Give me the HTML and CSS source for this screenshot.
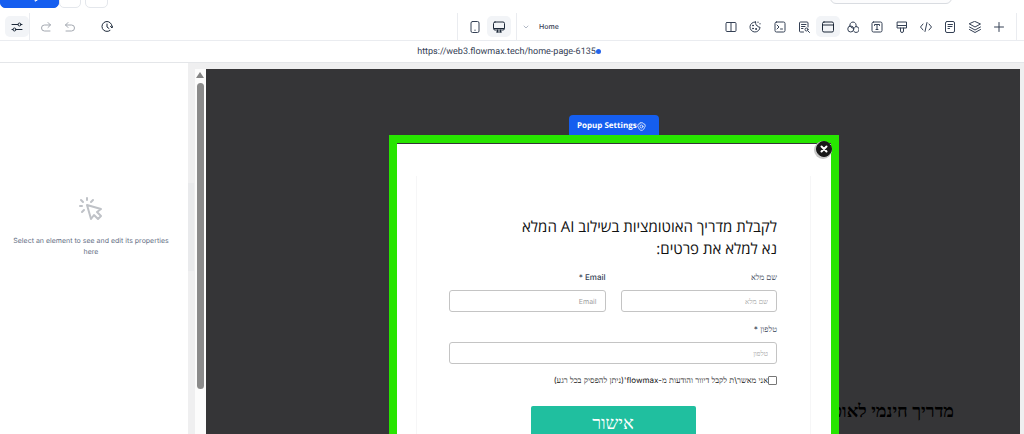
FILE: index.html
```html
<!DOCTYPE html>
<html lang="en">
<head>
<meta charset="utf-8">
<title>Page editor</title>
<link rel="stylesheet" href="styles.css">
</head>
<body>
<header class="actions">
  <button class="action action-primary" aria-label="Preview"><svg class="icon" viewBox="0 0 24 24"><path class="solid" d="M5 2l16 10L5 22z"/></svg></button>
  <button class="action action-save" aria-label="Save"><svg class="icon" viewBox="0 0 24 24"><rect x="3" y="3" width="18" height="16" rx="2"/><path d="M7 16h10"/></svg></button>
  <button class="action action-more" aria-label="More"><svg class="icon" viewBox="0 0 24 24"><path d="M12 5v8"/></svg></button>
  <button class="search" aria-label="Search"></button>
</header>
<nav class="toolbar">
  <div class="history">
    <div class="panel-toggle"><button class="tool active" aria-label="Properties"><svg class="icon" viewBox="0 0 24 24"><path d="M2 7h12M20 7h2M2 17h2M10 17h12"/><circle cx="17" cy="7" r="3"/><circle cx="7" cy="17" r="3"/></svg></button></div>
    <button class="tool muted" aria-label="Redo"><svg class="icon" viewBox="0 0 24 24"><path d="M16 3l5 5-5 5M21 8H9a6 6 0 0 0 0 12h11"/></svg></button>
    <button class="tool muted" aria-label="Undo"><svg class="icon" viewBox="0 0 24 24"><path d="M8 3L3 8l5 5M3 8h12a6 6 0 0 1 0 12H4"/></svg></button>
    <button class="tool tool-versions" aria-label="Version history"><svg class="icon" viewBox="0 0 24 24"><path d="M18 19a10 10 0 1 1 4-8M12 6v6l4 3M19 11l3 3 2-4"/></svg></button>
  </div>
  <div class="devices">
    <button class="tool" aria-label="Mobile"><svg class="icon" viewBox="0 0 24 24"><rect x="4" y="1" width="16" height="22" rx="3"/><path d="M12 18v1"/></svg></button>
    <button class="tool active" aria-label="Desktop"><svg class="icon" viewBox="0 0 24 24"><rect x="1" y="2" width="22" height="16" rx="3"/><path d="M2 15h20M9 18v4M15 18v4M7 22h10"/></svg></button>
  </div>
  <div class="page-picker">
    <svg class="chevron" viewBox="0 0 24 24"><path d="M4 8l8 8 8-8"/></svg>
    <select class="page-select" aria-label="Page"><option>Home</option></select>
  </div>
  <div class="tools">
    <button class="tool" aria-label="Columns"><svg class="icon" viewBox="0 0 24 24"><rect x="2" y="3" width="20" height="18" rx="2"/><path d="M12 3v18"/></svg></button>
    <button class="tool" aria-label="Theme"><svg class="icon" viewBox="0 0 24 24"><path d="M13 2A10 10 0 1 0 22 12c-2 1-4 0-4-2-3 1-5-3-5-8z"/><circle class="solid" cx="8" cy="9" r="1"/><circle class="solid" cx="8" cy="15" r="1"/><circle class="solid" cx="14" cy="16" r="1"/><path d="M18 2v1M22 5v1"/></svg></button>
    <button class="tool" aria-label="Console"><svg class="icon" viewBox="0 0 24 24"><rect x="2" y="2" width="20" height="20" rx="3"/><path d="M6 8l4 4-4 4M13 16h4"/></svg></button>
    <button class="tool" aria-label="Page SEO"><svg class="icon" viewBox="0 0 24 24"><path d="M11 22H5a2 2 0 0 1-2-2V4a2 2 0 0 1 2-2h13a2 2 0 0 1 2 2v8M7 7h9M7 11h7M7 15h3"/><circle cx="17" cy="17" r="3"/><path d="M20 20l3 3"/></svg></button>
    <button class="tool active" aria-label="Popup"><svg class="icon" viewBox="0 0 24 24"><rect x="1" y="2" width="22" height="20" rx="3"/><path d="M1 8h22"/></svg></button>
    <button class="tool" aria-label="Colors"><svg class="icon" viewBox="0 0 24 24"><path d="M6 11a6.500 6.500 0 1 1 12 0"/><circle cx="7.500" cy="16" r="6"/><path d="M18 11a6 6 0 1 1-5 9M6 10c2 5 9 6 12 1"/></svg></button>
    <button class="tool" aria-label="Typography"><svg class="icon" viewBox="0 0 24 24"><rect x="2" y="2" width="20" height="20" rx="3"/><path d="M7 9V7h10v2M12 7v10M10 17h4"/></svg></button>
    <button class="tool" aria-label="Brush"><svg class="icon" viewBox="0 0 24 24"><path d="M3 2h18v12H3zM3 9h18M9 14v6a3 3 0 0 0 6 0v-6"/></svg></button>
    <button class="tool" aria-label="Code"><svg class="icon" viewBox="0 0 24 24"><path d="M6 6l-5 6 5 6M18 6l5 6-5 6M14 3l-4 18"/></svg></button>
    <button class="tool" aria-label="Notes"><svg class="icon" viewBox="0 0 24 24"><rect x="3" y="1" width="18" height="22" rx="3"/><path d="M8 7h9M8 11h8M8 15h3"/></svg></button>
    <button class="tool" aria-label="Layers"><svg class="icon" viewBox="0 0 24 24"><path d="M12 1l11 5-11 6L1 6zM1 12l11 6 11-6M1 17l11 6 11-6"/></svg></button>
    <button class="tool" aria-label="Add"><svg class="icon" viewBox="0 0 24 24"><path d="M12 3v18M3 12h18"/></svg></button>
  </div>
</nav>
<div class="address"><a class="address-link" href="#">https://web3.flowmax.tech/home-page-6135</a><span class="status"></span></div>
<div class="workspace">
  <aside class="properties">
    <svg class="click-icon" viewBox="0 0 24 24"><path d="M8 8l4 14 3-4 4 4 3-3-4-4 4-3zM8 1v2M2 3l2 2M14 3l-2 2M1 9h2M3 15l2-2"/></svg>
    <p class="hint">Select an element to see and edit its properties here</p>
  </aside>
  <div class="gutter"><div class="resize"></div></div>
  <div class="scroller"><span class="scroll-up"></span><span class="scroll-thumb"></span></div>
  <main class="canvas" dir="rtl">
    <h1 class="page-title">מדריך חינמי לאוטומציות</h1>
    <div class="popup-layer">
      <button class="popup-settings" dir="ltr">Popup Settings<svg class="gear" viewBox="0 0 24 24"><path d="M9 2h6l2 3 4 1 1 5-2 4-2 4-4 3h-4l-4-3-2-4-2-4 1-5 4-1z"/><circle cx="12" cy="12" r="4"/></svg></button>
      <section class="popup">
        <button class="close" aria-label="Close"><svg class="close-icon" viewBox="0 0 24 24"><path d="M7 7l10 10M17 7L7 17"/></svg></button>
        <form class="form">
          <h2 class="form-title">לקבלת מדריך האוטומציות בשילוב AI המלא<br>נא למלא את פרטים:</h2>
          <div class="fields">
            <div class="field"><label class="label" for="name">שם מלא</label><input class="input" id="name" type="text" placeholder="שם מלא"></div>
            <div class="field"><label class="label" for="email">Email *</label><input class="input" id="email" type="email" placeholder="Email"></div>
            <div class="field field-wide"><label class="label" for="phone">טלפון *</label><input class="input" id="phone" type="tel" placeholder="טלפון"></div>
          </div>
          <div class="consent"><input class="check" id="consent" type="checkbox"><label class="consent-label" for="consent">אני מאשר\ת לקבל דיוור והודעות מ-flowmax'(ניתן להפסיק בכל רגע)</label></div>
          <button class="submit" type="button">אישור</button>
        </form>
      </section>
    </div>
  </main>
</div>
</body>
</html>
```
FILE: styles.css
```css
* { box-sizing: border-box; }
body {
  margin: 0;
  height: 100vh;
  overflow: hidden;
  display: flex;
  flex-direction: column;
  background: #fff;
  color: #344054;
  font-family: Inter, "Liberation Serif", sans-serif;
  text-rendering: geometricPrecision;
}
button, select, input { text-rendering: inherit; }
button { padding: 0; border: 0; background: none; color: inherit; font: inherit; }
svg { fill: none; stroke: currentColor; stroke-width: 2; stroke-linecap: round; stroke-linejoin: round; }
.solid { fill: currentColor; }
.icon { width: 12px; height: 12px; }

.actions { flex: none; height: 13px; padding-bottom: 5px; display: flex; align-items: flex-end; }
.action { flex: none; height: 24px; border: 1px solid #e4e7ec; border-radius: 5px; display: flex; align-items: center; justify-content: center; }
.action-primary { width: 59px; padding-left: 18px; background: #155eef; border-color: #155eef; color: #fff; }
.action-save { width: 22px; }
.action-more { width: 23px; margin-left: 4px; color: #98a2b3; }
.search { width: 122px; height: 20px; margin: 0 72px 4px auto; border: 1px solid #d9dce1; border-radius: 6px; background: #fcfcfd; }

.toolbar { flex: none; height: 28px; display: flex; border-bottom: 1px solid #eaecf0; }
.history { flex: none; width: 457px; display: flex; align-items: center; }
.panel-toggle { width: 30px; height: 100%; padding-left: 5px; margin-right: 4px; display: flex; align-items: center; border-right: 1px solid #eaecf0; }
.tool { flex: none; width: 24px; height: 21px; display: flex; align-items: center; justify-content: center; border-radius: 5px; color: #344054; }
.active { background: #f2f4f7; color: #1d2939; }
.muted { color: #a3a8b0; }
.tool-versions { margin-left: 13px; color: #1d2939; }
.devices { flex: none; width: 60px; display: flex; align-items: center; justify-content: center; border: solid #eaecf0; border-width: 0 1px; }
.page-picker { flex: 1; display: flex; align-items: center; gap: 10px; padding-left: 6px; }
.chevron { width: 6px; height: 6px; color: #98a2b3; stroke-width: 3; }
.page-select { appearance: none; border: 0; padding: 0; background: none; color: #344054; font: 500 7px/12px Inter, sans-serif; }
.tools { flex: none; width: 298px; margin-right: 7px; padding-right: 5px; display: flex; align-items: center; justify-content: space-between; border-right: 1px solid #eaecf0; }

.address { flex: none; height: 22px; padding-right: 6px; display: flex; align-items: center; justify-content: center; border-bottom: 1px solid #e4e6e9; }
.address-link { color: #344054; font: 9px/12px Roboto, Inter, sans-serif; text-decoration: none; }
.status { width: 5px; height: 5px; border-radius: 50%; background: #2563eb; }

.workspace { flex: 1; min-height: 0; display: flex; background: #efeff0; }
.properties { flex: none; width: 188px; padding: 0 12px 0 6px; display: flex; flex-direction: column; align-items: center; justify-content: center; background: #fff; color: #667085; }
.click-icon { width: 24px; height: 24px; margin-top: -44px; color: #bfc2c7; }
.hint { margin: 14px 0 0; font-size: 7px; line-height: 11px; text-align: center; }
.gutter { flex: none; width: 7px; display: flex; align-items: center; }
.resize { width: 6px; height: 88px; margin-bottom: 44px; background: #e9eaec; }
.scroller { flex: none; width: 11px; margin-top: 6px; padding: 3px 1px 0 0; display: flex; flex-direction: column; align-items: center; gap: 5px; background: #fcfcfc; }
.scroll-up { border: solid transparent; border-width: 0 4px 6px; border-bottom-color: #858585; }
.scroll-thumb { width: 7px; height: 306px; border-radius: 4px; background: #8b8b8b; }

.canvas { position: relative; flex: 1; min-width: 0; margin: 6px 4px 0 0; overflow: hidden; background: #353537; }
.page-title { margin: 331px 66px 0 0; color: #000; font: bold 18px/22px "Liberation Serif", serif; }
.popup-layer { position: absolute; inset: 0; padding: 46px 0 0 2px; display: flex; flex-direction: column; align-items: center; }
.popup-settings { flex: none; width: 90px; height: 20px; padding: 2px 0 0 8px; display: flex; align-items: center; border-radius: 4px 4px 0 0; background: #155eef; color: #fff; font: 700 8px/12px "Open Sans", sans-serif; }
.gear { width: 9px; height: 9px; }
.popup { position: relative; flex: none; width: 450px; min-height: 360px; padding: 33px 20px 0 19px; border: 8px solid #27e500; background: #fff; box-shadow: inset 0 1px #353537; }
.close { position: absolute; top: -2px; right: -1px; width: 16px; height: 16px; display: flex; align-items: center; justify-content: center; border: 1px solid #191919; border-radius: 50%; background: #191919; color: #fff; box-shadow: -1px 1px 0 1px #c8c8c8; }
.close-icon { width: 12px; height: 12px; stroke-width: 4; }
.form { padding: 40px 33px 0 32px; border: solid #f6f6f7; border-width: 0 1px; display: flex; flex-direction: column; }
.form-title { margin: 0; color: #111; font: 400 15px/22px "Open Sans", sans-serif; }
.fields { margin-top: 10px; display: grid; grid-template-columns: 1fr 1fr; gap: 10px 15px; }
.field { display: flex; flex-direction: column; gap: 6px; }
.field-wide { grid-column: 1 / -1; }
.label { color: #344054; font-size: 8px; line-height: 14px; font-weight: 500; }
.input { width: 100%; height: 22px; padding: 0 8px; border: 1px solid #c4c4c4; border-radius: 3px; background: #fff; font: 7px/12px Inter, "Liberation Serif", sans-serif; text-align: right; direction: rtl; }
.input::placeholder { color: #a0a0a0; opacity: 1; }
.consent { margin-top: 9px; display: flex; align-items: center; }
.check { appearance: none; width: 9px; height: 9px; margin: 0; border: 1px solid #777; border-radius: 1px; background: #fff; }
.consent-label { color: #111; font-size: 8px; line-height: 14px; font-weight: 400; white-space: nowrap; }
.submit { align-self: center; width: 165px; height: 34px; margin-top: 19px; border-radius: 2px; background: #20bf9f; color: #fff; font: 18px/22px "Liberation Serif", serif; }
```
